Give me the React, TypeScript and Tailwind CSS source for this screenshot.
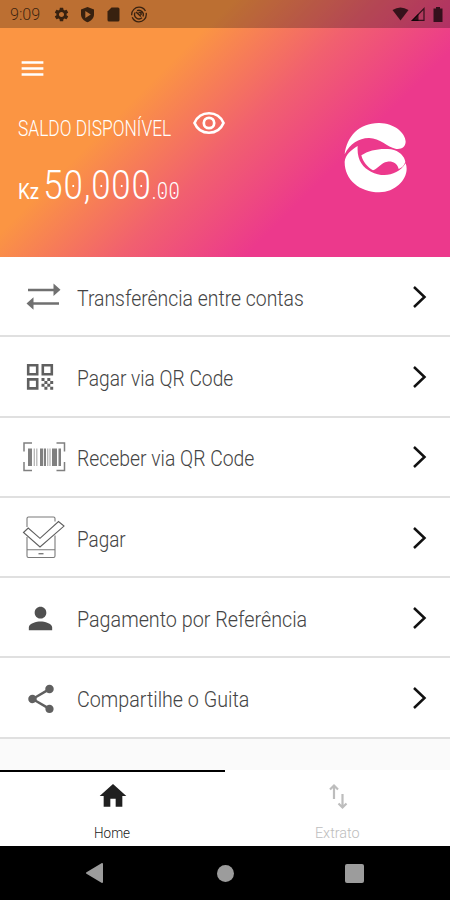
import { MdHome, MdMenu, MdPerson, MdSettings, MdShare } from "react-icons/md";
import type { ReactNode } from "react";

type MenuItem = {
  title: string;
  icon: ReactNode;
  scale: string;
};

function TransferIcon() {
  return (
    <svg width="44" height="44" viewBox="0 0 44 44" className="text-[#707070]">
      <path d="M6 15h28M10 28.500h27" stroke="currentColor" strokeWidth="2.600" />
      <path d="M31.500 8.500l7 6.300-7 6.300zM11.500 22.200l-7 6.300 7 6.300z" fill="currentColor" />
    </svg>
  );
}

function QrIcon() {
  return (
    <svg width="44" height="44" viewBox="0 0 44 44" className="text-[#606060]">
      <path
        d="M6.200 10.200h9v9h-9zM20.800 10.200h9v9h-9zM6.200 24.400h9v9h-9z"
        fill="none"
        stroke="currentColor"
        strokeWidth="2.600"
      />
      <path
        d="M19.500 23h3v3h-3zM25.300 23h3v3h-3zM22.400 25.900h3v3h-3zM28.200 25.900h3v3h-3zM19.500 28.800h3v3h-3zM25.300 28.800h3v3h-3zM22.400 31.700h3v3h-3zM28.200 31.700h3v3h-3z"
        fill="currentColor"
      />
    </svg>
  );
}

function BarcodeIcon() {
  return (
    <svg width="44" height="44" viewBox="0 0 44 44" className="text-[#808080]">
      <path
        d="M10 7h-8v8.500M34.500 7h8v8.500M2 26v8.500h8M42.500 26v8.500h-8"
        fill="none"
        stroke="currentColor"
        strokeWidth="1.500"
      />
      <path
        d="M6 12.500h4v17.500h-4zM18 12.500h3v17.500h-3zM21.800 12.500h2.200v17.500h-2.200zM30 12.500h5v17.500h-5zM36.500 12.500h2.500v17.500h-2.500z"
        fill="currentColor"
      />
      <path
        d="M12.300 12.500v17.500M14.800 12.500v17.500M25.700 12.500v17.500M28 12.500v17.500"
        stroke="#b5b5b5"
        strokeWidth="1.300"
      />
    </svg>
  );
}

function PayIcon() {
  return (
    <svg width="44" height="44" viewBox="0 0 44 44" fill="none" stroke="#7a7a7a" strokeWidth="1.100">
      <path d="M5 11V2.500q0-1.500 1.500-1.500h25q1.500 0 1.500 1.500v3M33 19.500v20.500q0 1.500-1.500 1.500H6.500q-1.500 0-1.500-1.500V21M5 33.800h28" />
      <path d="M1.500 16.500l4.700-4.500L18 22.300 36.500 5.500l5.500 4.600L18 31z" stroke="#5e5e5e" />
      <path d="M16.500 37.700h5" strokeWidth="1.400" />
    </svg>
  );
}

function Logo() {
  return (
    <svg width="65" height="72" viewBox="71 66 195 216" fill="#fff">
      <path d="M76 163C82 110 120 68 180 69c45 1 78 29 79 56-1 17-14 24-31 21-23-4-48-33-80-32-30 1-56 17-72 49z" />
      <path d="M115 138c-3 42 15 64 40 77 35 18 80 13 104-25 14 38-24 87-79 87-60 0-105-39-104-92 2-20 19-35 39-47z" />
      <path d="M126 166c23-16 58-22 89-18 25 4 41 22 43 38-4 12-12 18-20 21-5-18-18-24-34-22-20 3-26 20-43 26-17-10-30-25-35-45z" />
    </svg>
  );
}

// Zero with a dot in its middle
function Zero() {
  return (
    <span className="relative after:absolute after:top-1/2 after:left-1/2 after:size-[2px] after:-translate-x-1/2 after:bg-white after:content-['']">
      0
    </span>
  );
}

function StatusBar() {
  return (
    <div className="flex h-7 items-center bg-black/25 px-[10px] text-black/70">
      <span className="mt-[2px] w-[30px] origin-left scale-x-[0.95] text-[17px] font-light">9:09</span>
      <div className="ml-[13px] flex items-center gap-[9px]">
        <MdSettings size={17} />
        <svg width="17" height="17" viewBox="0 0 17 17">
          <path d="M8.500 1l6.500 2.500v5c0 3.500-3 6.500-6.500 7.700C5 15 2 12 2 8.500v-5z" fill="currentColor" />
          <path d="M6.300 5l5.500 3.500-5.500 3.500z" fill="#bb7236" />
        </svg>
        <svg width="17" height="17" viewBox="0 0 17 17">
          <path d="M6.500 1.500H13q1.500 0 1.500 1.500v11q0 1.500-1.500 1.500H4q-1.500 0-1.500-1.500V5.500z" fill="currentColor" />
        </svg>
        <svg width="17" height="17" viewBox="0 0 17 17" fill="none" stroke="currentColor">
          <circle cx="8" cy="8.500" r="7.300" strokeWidth="1.300" strokeDasharray="20 2" />
          <path d="M4 6.500a4.500 4.500 0 0 0 7 5.300M6 4.700a4.500 4.500 0 0 1 6 5.800" strokeWidth="1.300" />
          <path d="M5 6l5 4.500M7.500 6.500h2.500v2.500" strokeWidth="1.500" />
        </svg>
      </div>
      <div className="-mr-[3px] ml-auto flex items-center">
        <svg width="17" height="14" viewBox="0 0 17 14">
          <path d="M.5 3Q8.500-2 16.500 3L8.500 13.500z" fill="currentColor" />
        </svg>
        <svg width="14" height="14" viewBox="0 0 14 14" className="ml-[2px]">
          <path d="M1.500 13.300L13 1.500v11.800z" fill="none" stroke="currentColor" strokeWidth="1.200" />
          <path d="M0 14L7.500 6.500v7.500z" fill="currentColor" />
        </svg>
        <svg width="10" height="15" viewBox="0 0 10 15" className="ml-[8px]">
          <path d="M3 0h4v1.500h2.500V15H.5V1.500H3z" fill="currentColor" />
        </svg>
      </div>
    </div>
  );
}

function Header() {
  return (
    <header className="h-[257px] bg-[linear-gradient(135deg,#fb9543_33%,#f1606f_53%,#ec398c_71%)] text-white">
      <StatusBar />
      <div className="flex justify-between pr-[42px] pl-[18px]">
        <div>
          <MdMenu size={29} className="mt-[26px]" />
          <div className="mt-[24px] flex h-[32px] items-center">
            <span className="mt-[11px] w-[175px] origin-left scale-x-[0.79] text-[22px] font-light whitespace-nowrap">
              SALDO DISPONÍVEL
            </span>
            <svg width="32" height="24" viewBox="0 0 32 24" fill="none" stroke="currentColor" strokeWidth="2.700">
              <path d="M1.500 12C7 -1 25 -1 30.500 12 25 25 7 25 1.500 12z" />
              <circle cx="16" cy="12" r="5.200" />
            </svg>
          </div>
          <div className="mt-[16px] flex h-[48px] origin-left scale-x-[0.85] items-baseline">
            <span className="text-[22px]">Kz</span>
            <span className="ml-[5px] text-[41px] font-light tracking-[1px]">
              5<Zero />,<Zero /><Zero /><Zero />
            </span>
            <span className="text-[23px] font-light tracking-[0.8px]">
              .<Zero /><Zero />
            </span>
          </div>
        </div>
        <div className="mt-[94px]">
          <Logo />
        </div>
      </div>
    </header>
  );
}

function App() {
  const menuItems: MenuItem[] = [{
    title: 'Transferência entre contas',
    icon: <TransferIcon />,
    scale: 'scale-x-[0.882]'
  }, {
    title: 'Pagar via QR Code',
    icon: <QrIcon />,
    scale: 'scale-x-[0.872]'
  }, {
    title: 'Receber via QR Code',
    icon: <BarcodeIcon />,
    scale: 'scale-x-[0.88]'
  }, {
    title: 'Pagar',
    icon: <PayIcon />,
    scale: 'scale-x-[0.86]'
  }, {
    title: 'Pagamento por Referência',
    icon: <MdPerson size={35} className="mr-[7px] text-[#505050]" />,
    scale: 'scale-x-[0.897]'
  }, {
    title: 'Compartilhe o Guita',
    icon: <MdShare size={34} className="mr-[6px] text-[#606060]" />,
    scale: 'scale-x-[0.895]'
  }];

  return (
    <div className="flex h-[900px] w-[450px] flex-col overflow-hidden bg-[#fafafa] font-[Roboto,sans-serif]">
      <Header />
      <ul>
        {menuItems.map((item) => (
          <li
            key={item.title}
            className="flex h-[80.300px] items-center border-b-2 border-[#e0e0e0] bg-white pr-[22px] pl-[18px]"
          >
            <span className="mt-[2px] flex w-[59px] shrink-0 justify-center pr-[8px]">{item.icon}</span>
            <span className={`${item.scale} mt-[4px] origin-left text-[22px] font-light whitespace-nowrap text-[#444]`}>
              {item.title}
            </span>
            <svg width="16" height="24" viewBox="0 0 16 24" className="mt-[1px] ml-auto" fill="none" stroke="#111" strokeWidth="2.500">
              <path d="M2 2l10.500 10L2 22" />
            </svg>
          </li>
        ))}
      </ul>
      <nav className="mt-auto flex h-[76px] bg-white">
        <div className="flex w-1/2 flex-col items-center border-t-2 border-black pt-[8px] text-[#202020]">
          <MdHome size={32} />
          <span className="mt-[10px] scale-x-[0.9] text-[15px] font-light">Home</span>
        </div>
        <div className="flex w-1/2 flex-col items-center pt-[13px] text-[#bdbdbd]">
          <svg width="20" height="28" viewBox="0 0 20 28" fill="none" stroke="currentColor" strokeWidth="2.200">
            <path d="M6 16V3M2 6.500L6 2.500l4 4M14.500 11v13M10.500 20.500l4 4 4-4" />
          </svg>
          <span className="mt-[11px] scale-x-[0.96] text-[15px] font-light">Extrato</span>
        </div>
      </nav>
      <div className="flex h-[54px] items-center bg-black text-[#9c9c9c]">
        <svg width="18" height="20" viewBox="0 0 18 20" className="ml-[86px]">
          <path d="M16 1v18L1 10z" fill="currentColor" stroke="currentColor" strokeWidth="2" strokeLinejoin="round" />
        </svg>
        <span className="ml-[113px] size-[17px] rounded-full bg-[#9c9c9c]" />
        <span className="ml-[111px] size-[19px] rounded-xs bg-[#9c9c9c]" />
      </div>
    </div>
  );
}

export default App;
